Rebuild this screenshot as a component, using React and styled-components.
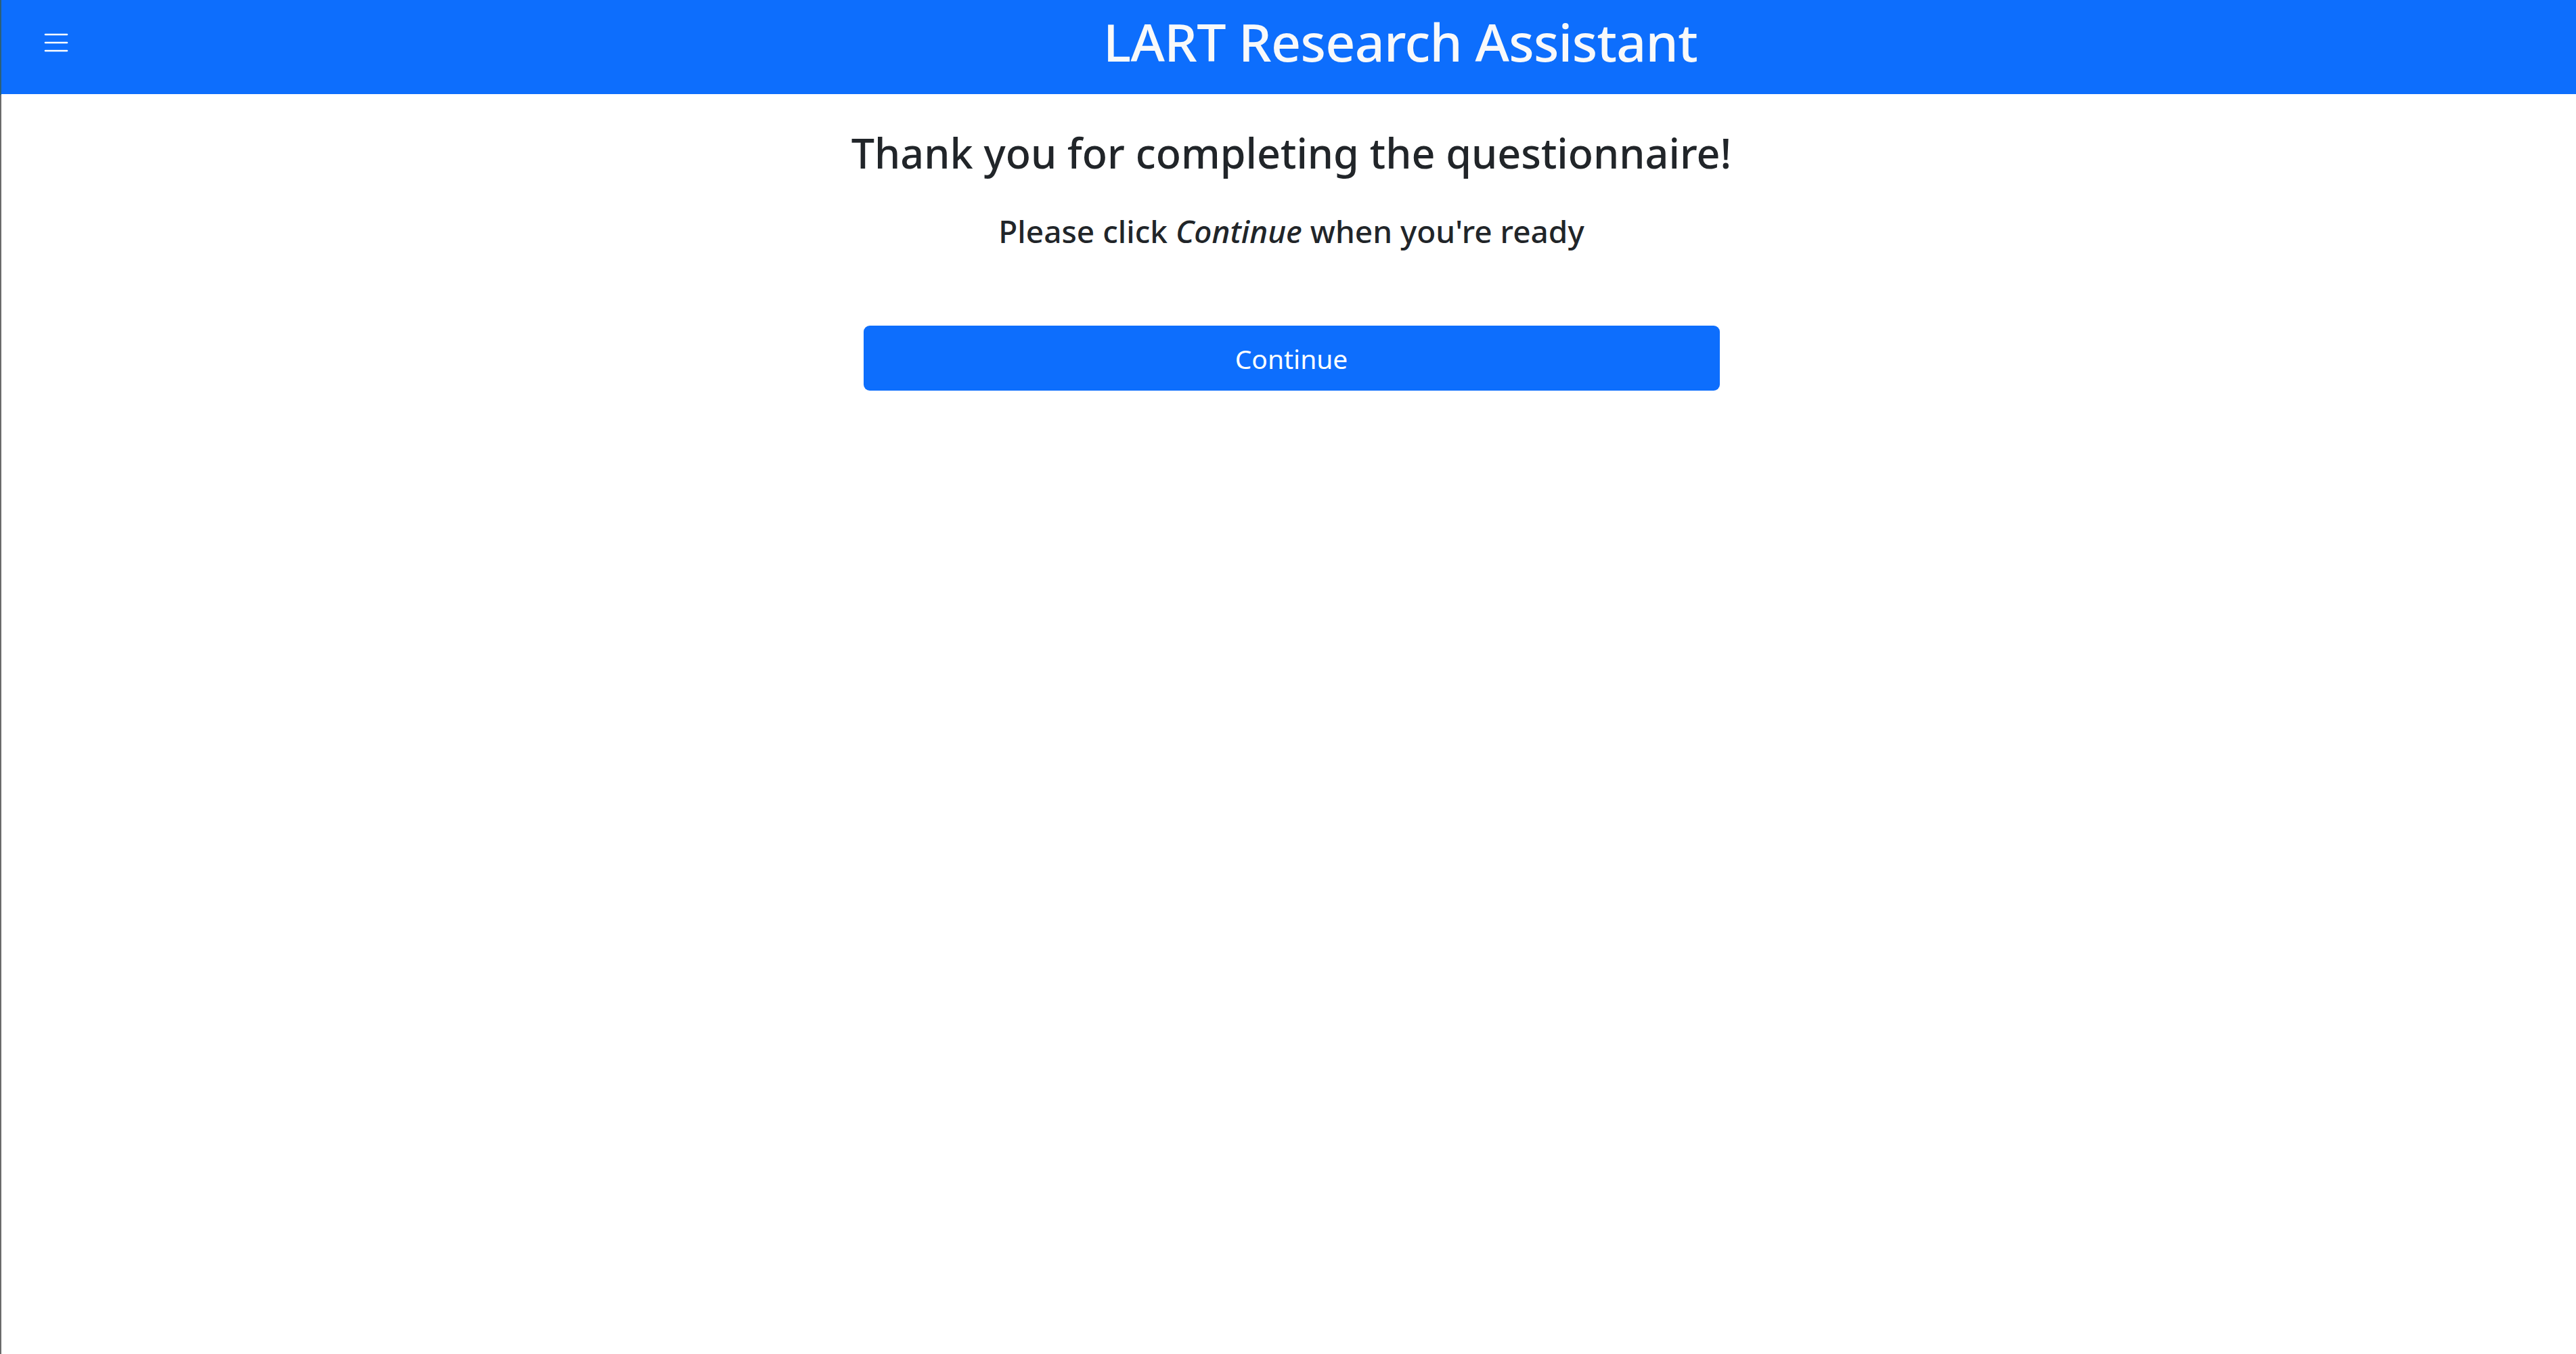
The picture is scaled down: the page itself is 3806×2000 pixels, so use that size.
import React from 'react'
import styled, {createGlobalStyle} from 'styled-components'

const GlobalStyle = createGlobalStyle`
    html, body {
        margin: 0;
        padding: 0;
        background: #ffffff;
    }
    body {
        font-family: "Noto Sans", "Open Sans", sans-serif;
        color: #212529;
    }
`;

const App = () => {
    return (
        <Page>
            <GlobalStyle/>
            <EdgeStrip/>
            <Main>
                <NavBar>
                    <MenuArea>
                        <MenuButton aria-label="menu">
                            <svg width="36" height="30" viewBox="0 0 36 30" style={{display: 'block'}}>
                                <g stroke="#ffffff" strokeWidth="2.6" strokeLinecap="round">
                                    <line x1="2" y1="3" x2="34" y2="3"/>
                                    <line x1="2" y1="15" x2="34" y2="15"/>
                                    <line x1="2" y1="27" x2="34" y2="27"/>
                                </g>
                            </svg>
                        </MenuButton>
                    </MenuArea>
                    <Brand>LART Research Assistant</Brand>
                </NavBar>
                <Content>
                    <Column>
                        <Heading>Thank you for completing the questionnaire!</Heading>
                        <Lead>Please click <em>Continue</em> when you're ready</Lead>
                        <PrimaryButton>Continue</PrimaryButton>
                    </Column>
                </Content>
            </Main>
        </Page>
    )
};

export default App

const Page = styled.div`
    display: flex;
    min-height: 2000px;
    width: 100%;
`;

const EdgeStrip = styled.div`
    width: 2px;
    flex-shrink: 0;
    background: linear-gradient(#2b5f7a 0, #2b5f7a 140px, #6a6a6a 140px, #6a6a6a 100%);
`;

const Main = styled.div`
    flex: 1;
    display: flex;
    flex-direction: column;
`;

const NavBar = styled.header`
    box-sizing: border-box;
    height: 139px;
    background: #0d6efd;
    display: grid;
    grid-template-columns: 330px 1fr;
    align-items: start;
`;

const MenuArea = styled.div`
    padding: 48px 0 0 63px;
`;

const MenuButton = styled.button`
    border: none;
    background: transparent;
    padding: 0;
    display: block;
    cursor: pointer;
`;

const Brand = styled.h1`
    margin: 0;
    padding-top: 16px;
    text-align: center;
    color: #f8f9fa;
    font-size: 77px;
    line-height: 1.2;
    font-weight: 500;
    letter-spacing: -0.7px;
`;

const Content = styled.main`
    display: flex;
    justify-content: center;
    padding-left: 8px;
`;

const Column = styled.div`
    display: flex;
    flex-direction: column;
    align-items: center;
    width: 1265px;
`;

const Heading = styled.h3`
    margin: 50px 0 0;
    font-size: 61px;
    line-height: 1.2;
    font-weight: 500;
    white-space: nowrap;
    text-align: center;
`;

const Lead = styled.p`
    margin: 52px 0 0;
    font-size: 46px;
    line-height: 1.2;
    font-weight: 500;
    white-space: nowrap;
    text-align: center;

    em {
        font-style: italic;
    }
`;

const PrimaryButton = styled.button`
    margin-top: 112px;
    width: 100%;
    height: 96px;
    border: none;
    border-radius: 9px;
    background: #0d6efd;
    color: #ffffff;
    font-family: "Noto Sans", "Open Sans", sans-serif;
    font-size: 39px;
    cursor: pointer;
`;
